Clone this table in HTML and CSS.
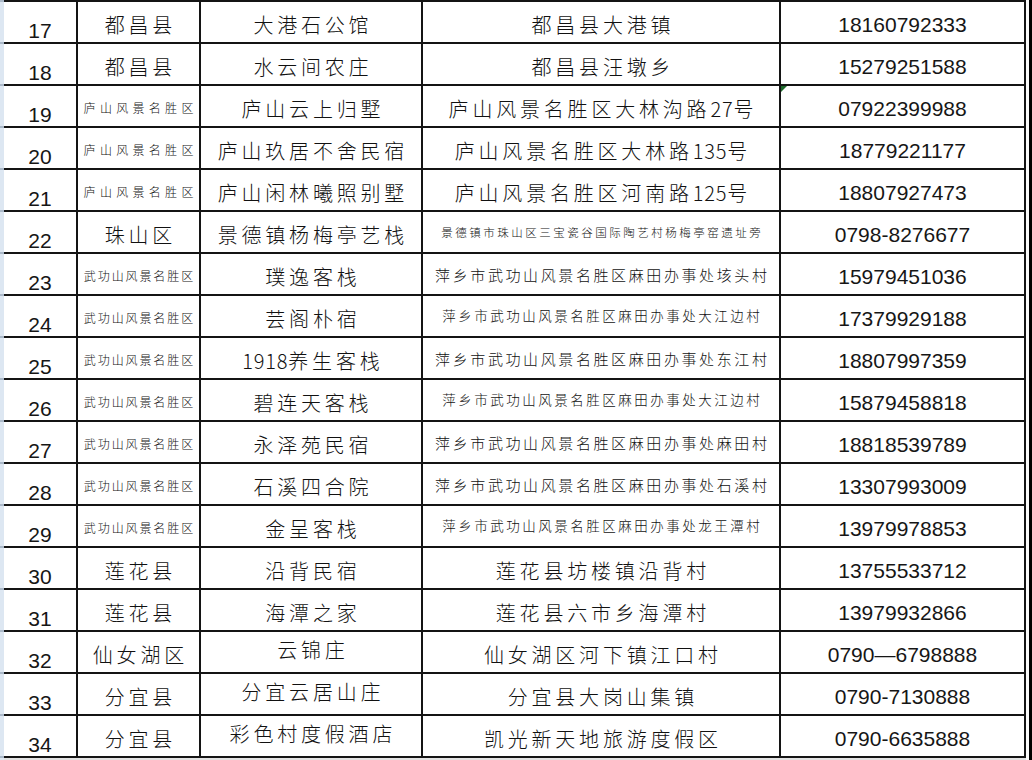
FILE: index.html
```html
<!DOCTYPE html>
<html lang="zh-CN">
<head>
<meta charset="utf-8">
<title>民宿名单</title>
<link rel="stylesheet" href="styles.css">
</head>
<body>
<div class="page">
  <div class="rowhdr"></div>
  <div class="main">
    <div class="sheet">
      <div class="c no">17</div><div class="c area">都昌县</div><div class="c name">大港石公馆</div><div class="c addr">都昌县大港镇</div><div class="c tel">18160792333</div>
      <div class="c no">18</div><div class="c area">都昌县</div><div class="c name">水云间农庄</div><div class="c addr">都昌县汪墩乡</div><div class="c tel">15279251588</div>
      <div class="c no">19</div><div class="c area sm">庐山风景名胜区</div><div class="c name">庐山云上归墅</div><div class="c addr">庐山风景名胜区大林沟路<span class="d">27</span>号</div><div class="c tel flag">07922399988</div>
      <div class="c no">20</div><div class="c area sm">庐山风景名胜区</div><div class="c name">庐山玖居不舍民宿</div><div class="c addr">庐山风景名胜区大林路<span class="d">135</span>号</div><div class="c tel">18779221177</div>
      <div class="c no">21</div><div class="c area sm">庐山风景名胜区</div><div class="c name">庐山闲林曦照别墅</div><div class="c addr">庐山风景名胜区河南路<span class="d">125</span>号</div><div class="c tel">18807927473</div>
      <div class="c no">22</div><div class="c area">珠山区</div><div class="c name">景德镇杨梅亭艺栈</div><div class="c addr tiny">景德镇市珠山区三宝瓷谷国际陶艺村杨梅亭窑遗址旁</div><div class="c tel">0798-8276677</div>
      <div class="c no">23</div><div class="c area xs">武功山风景名胜区</div><div class="c name">璞逸客栈</div><div class="c addr mid">萍乡市武功山风景名胜区麻田办事处垓头村</div><div class="c tel">15979451036</div>
      <div class="c no">24</div><div class="c area xs">武功山风景名胜区</div><div class="c name">芸阁朴宿</div><div class="c addr small">萍乡市武功山风景名胜区麻田办事处大江边村</div><div class="c tel">17379929188</div>
      <div class="c no">25</div><div class="c area xs">武功山风景名胜区</div><div class="c name"><span class="d">1918</span>养生客栈</div><div class="c addr mid">萍乡市武功山风景名胜区麻田办事处东江村</div><div class="c tel">18807997359</div>
      <div class="c no">26</div><div class="c area xs">武功山风景名胜区</div><div class="c name">碧连天客栈</div><div class="c addr small">萍乡市武功山风景名胜区麻田办事处大江边村</div><div class="c tel">15879458818</div>
      <div class="c no">27</div><div class="c area xs">武功山风景名胜区</div><div class="c name">永泽苑民宿</div><div class="c addr mid">萍乡市武功山风景名胜区麻田办事处麻田村</div><div class="c tel">18818539789</div>
      <div class="c no">28</div><div class="c area xs">武功山风景名胜区</div><div class="c name">石溪四合院</div><div class="c addr mid">萍乡市武功山风景名胜区麻田办事处石溪村</div><div class="c tel">13307993009</div>
      <div class="c no">29</div><div class="c area xs">武功山风景名胜区</div><div class="c name">金呈客栈</div><div class="c addr small">萍乡市武功山风景名胜区麻田办事处龙王潭村</div><div class="c tel">13979978853</div>
      <div class="c no">30</div><div class="c area">莲花县</div><div class="c name">沿背民宿</div><div class="c addr">莲花县坊楼镇沿背村</div><div class="c tel">13755533712</div>
      <div class="c no">31</div><div class="c area">莲花县</div><div class="c name">海潭之家</div><div class="c addr">莲花县六市乡海潭村</div><div class="c tel">13979932866</div>
      <div class="c no">32</div><div class="c area">仙女湖区</div><div class="c name up">云锦庄</div><div class="c addr">仙女湖区河下镇江口村</div><div class="c tel">0790—6798888</div>
      <div class="c no">33</div><div class="c area">分宜县</div><div class="c name up">分宜云居山庄</div><div class="c addr">分宜县大岗山集镇</div><div class="c tel">0790-7130888</div>
      <div class="c no">34</div><div class="c area">分宜县</div><div class="c name up">彩色村度假酒店</div><div class="c addr">凯光新天地旅游度假区</div><div class="c tel">0790-6635888</div>
    </div>
    <div class="below"></div>
  </div>
  <div class="gap"></div>
  <div class="edge"></div>
</div>
</body>
</html>
```

FILE: styles.css
```css
html, body {
  margin: 0;
  padding: 0;
  background: #ffffff;
}

.page {
  display: flex;
  width: 1032px;
  height: 760px;
  overflow: hidden;
}

.rowhdr {
  width: 4px;
  flex: none;
  background-color: #dde7f2;
  background-image: repeating-linear-gradient(to bottom, #aab8c8 0px, #aab8c8 2px, transparent 2px, transparent 42px);
}

.main {
  width: 1022px;
  flex: none;
  display: flex;
  flex-direction: column;
}

.sheet {
  display: grid;
  grid-template-columns: 74px 123px 222px 358px 245px;
  grid-auto-rows: 42px;
  border-top: 2px solid #141414;
}

.below {
  flex: 1;
  background: #e2e2e2;
}

.gap {
  width: 3px;
  flex: none;
  background: #fbfbfb;
}

.edge {
  width: 3px;
  flex: none;
  background: #000000;
}

.c {
  box-sizing: border-box;
  border-right: 2px solid #141414;
  border-bottom: 2px solid #141414;
  display: flex;
  align-items: center;
  justify-content: center;
  white-space: nowrap;
  color: #111111;
  font-family: "Noto Sans CJK SC", sans-serif;
  font-weight: 300;
  line-height: 1;
  position: relative;
}

.d {
  letter-spacing: 0.8px;
}

.no {
  font-family: "Liberation Sans", Arial, sans-serif;
  font-weight: 400;
  font-size: 21px;
  padding-top: 16px;
  color: #161616;
}

.area {
  font-size: 20px;
  letter-spacing: 3.8px;
  padding-left: 3.8px;
  padding-top: 5px;
}

.area.sm {
  font-size: 12px;
  letter-spacing: 4.3px;
  padding-left: 4.3px;
  padding-top: 3px;
}

.area.xs {
  font-size: 12px;
  letter-spacing: 1.9px;
  padding-left: 1.9px;
  padding-top: 3px;
}

.name {
  font-size: 20px;
  letter-spacing: 3.8px;
  padding-left: 3.8px;
  padding-top: 5px;
}

.name.up {
  padding-top: 0;
  padding-bottom: 4px;
}

.addr {
  font-size: 20px;
  letter-spacing: 3.8px;
  padding-left: 3.8px;
  padding-top: 5px;
}

.addr.tiny {
  font-size: 11.5px;
  letter-spacing: 2.5px;
  padding-left: 2.5px;
  padding-top: 2px;
}

.addr.mid {
  font-size: 15px;
  letter-spacing: 2.6px;
  padding-left: 2.6px;
  padding-top: 0;
}

.addr.small {
  font-size: 13.5px;
  letter-spacing: 2.5px;
  padding-left: 2.5px;
  padding-top: 0;
}

.tel {
  font-family: "Liberation Sans", Arial, sans-serif;
  font-weight: 400;
  font-size: 21px;
  padding-top: 5px;
  color: #161616;
}

.flag::before {
  content: "";
  position: absolute;
  left: 0;
  top: 0;
  border-top: 6px solid #1e6a2c;
  border-right: 6px solid transparent;
}
```
